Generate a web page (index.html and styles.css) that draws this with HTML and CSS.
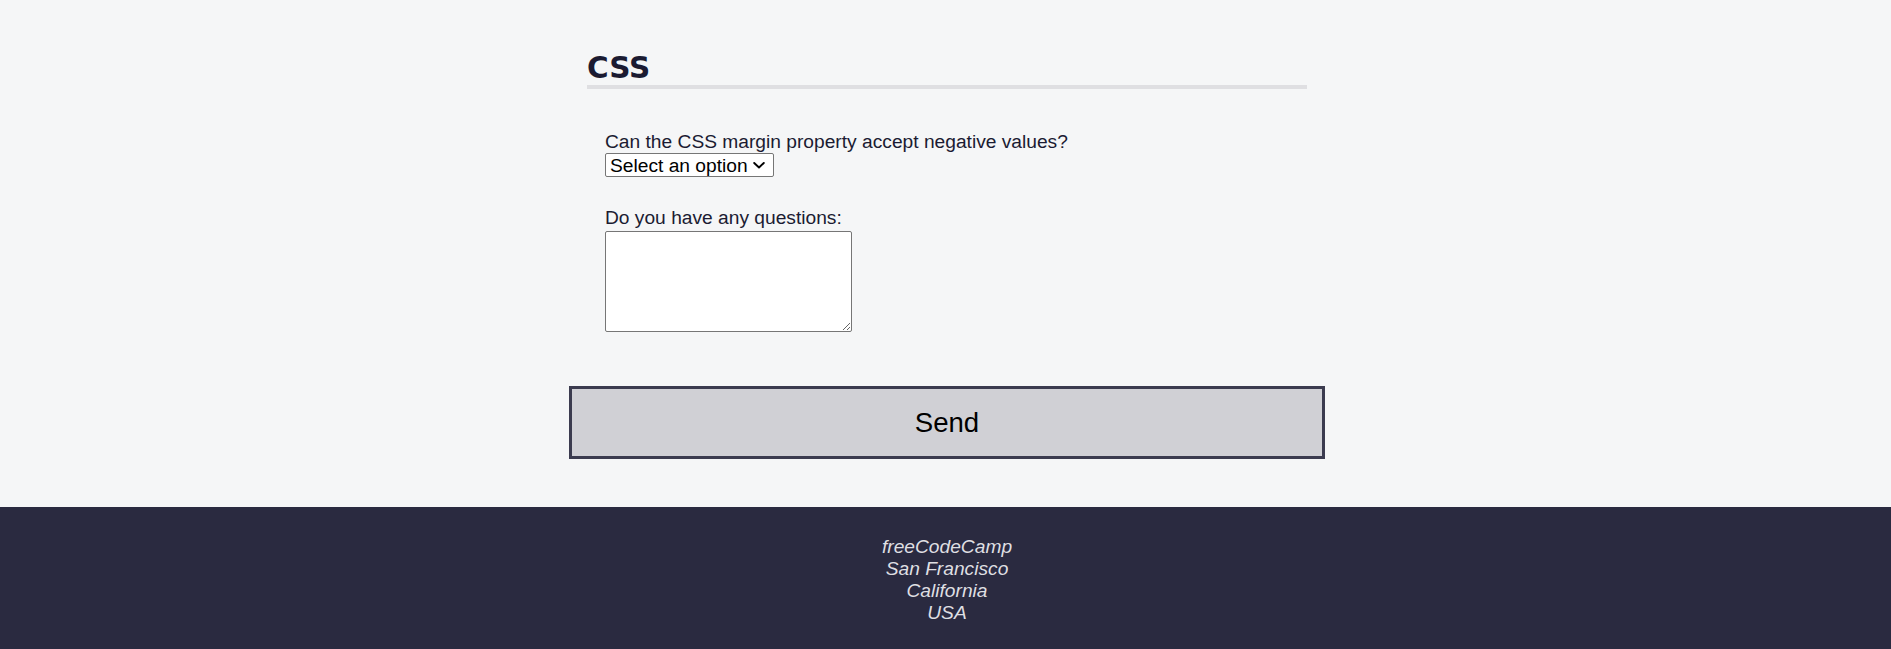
FILE: index.html
```html
<!DOCTYPE html>
<html lang="en">
<head>
<meta charset="utf-8">
<title>Accessibility Quiz</title>
<link rel="stylesheet" href="styles.css">
</head>
<body>
<main class="main">
  <form class="quiz">
    <section class="section">
      <h2 class="section-title">CSS</h2>
      <div class="formrow">
        <div class="question-block">
          <label for="customer">Can the CSS margin property accept negative values?</label>
        </div>
        <div class="answer">
          <span class="select-wrap">
            <select class="answer-select" id="customer" name="customer">
              <option value="">Select an option</option>
              <option value="yes">Yes</option>
              <option value="no">No</option>
            </select>
            <svg class="select-chevron" width="12" height="7" viewBox="0 0 12 7" aria-hidden="true">
              <path d="M1.2 1 L6 5.5 L10.8 1" fill="none" stroke="#000" stroke-width="1.9" stroke-linecap="round" stroke-linejoin="round"/>
            </svg>
          </span>
        </div>
        <div class="question-block">
          <label for="question">Do you have any questions:</label>
        </div>
        <div class="answer">
          <textarea class="answer-text" id="question" name="question"></textarea>
        </div>
      </div>
    </section>
    <button class="send-btn" type="submit">Send</button>
  </form>
</main>
<footer class="footer">
  <address class="address">
    freeCodeCamp<br>
    San Francisco<br>
    California<br>
    USA
  </address>
</footer>
</body>
</html>
```

FILE: styles.css
```css
* {
  box-sizing: border-box;
}

body {
  margin: 0;
  background: #f5f6f7;
  color: #1b1b32;
  font-family: "Liberation Sans", Arial, Helvetica, sans-serif;
  font-size: 19.2px;
}

.main {
  padding-left: 3px;
}

.section {
  width: 720px;
  margin: 0 auto 12px auto;
}

.section-title {
  font-family: "DejaVu Sans", Verdana, Tahoma, sans-serif;
  font-size: 29.5px;
  font-weight: bold;
  line-height: 34px;
  margin: 0 0 24px 0;
  padding-top: 51px;
  border-bottom: 4.8px solid #dfdfe2;
}

.formrow {
  margin-top: 36px;
  padding: 0 18px 6px 18px;
}

.question-block {
  display: block;
  width: 100%;
  margin-top: 24px;
  padding-top: 6px;
  line-height: 22px;
}

.select-wrap {
  position: relative;
  display: block;
  width: 169px;
}

.answer-select {
  display: block;
  width: 169px;
  height: 24px;
  margin: 0;
  font-family: "Liberation Sans", Arial, sans-serif;
  font-size: 19.2px;
  color: #000;
  background: #fff;
  border: 1px solid #767676;
  border-radius: 2px;
  padding: 0 20px 0 4px;
  -webkit-appearance: none;
  appearance: none;
}

.select-chevron {
  position: absolute;
  right: 9px;
  top: 9px;
  pointer-events: none;
}

.answer-text {
  display: block;
  width: 247px;
  height: 101px;
  margin: 2px 0 0 0;
  border: 1px solid #767676;
  border-radius: 2px;
  background: #fff;
}

.send-btn {
  display: block;
  width: 40%;
  margin: 48px auto 48px auto;
  padding: 18px;
  font-family: "Liberation Sans", Arial, sans-serif;
  font-size: 27.6px;
  line-height: 31px;
  color: #000;
  background: #d0d0d5;
  border: 3.6px solid #3b3b4f;
}

.footer {
  display: flex;
  justify-content: center;
  background-color: #2a2a40;
  color: #dfdfe2;
  padding: 23.6px 0 30px 3px;
}

.address {
  text-align: center;
  padding: 5.76px;
  font-style: italic;
  line-height: 22px;
}
```
